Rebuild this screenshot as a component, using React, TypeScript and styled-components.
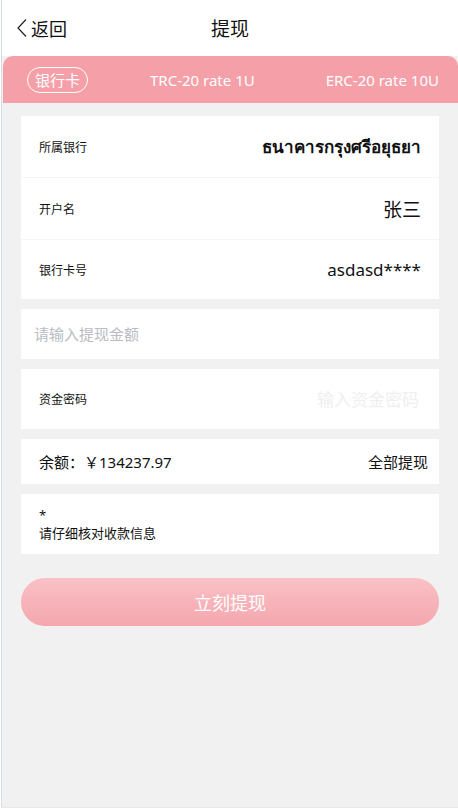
import styled, { createGlobalStyle } from 'styled-components';
import { FC } from 'react';

const GlobalStyle = createGlobalStyle`
  html, body {
    margin: 0;
    padding: 0;
    background: #ffffff;
    font-family: 'Noto Sans', 'Noto Sans CJK SC', sans-serif;
  }
`;

const Page = styled.div`
  width: 456px;
  height: 807px;
  margin-left: 1px;
  border-left: 1px solid #d6dce6;
  border-bottom: 1px solid #e4e7ec;
  background: #f1f1f1;
  display: flex;
  flex-direction: column;
`;

const Header = styled.header`
  height: 56px;
  background: #ffffff;
  display: flex;
  align-items: center;
  position: relative;
`;

const Back = styled.div`
  display: flex;
  align-items: center;
  gap: 2px;
  padding-left: 13px;
  font-size: 18px;
  color: #111;
`;

const Title = styled.h1`
  position: absolute;
  left: 0;
  right: 0;
  margin: 0;
  text-align: center;
  font-size: 19px;
  font-weight: 400;
  color: #111;
  pointer-events: none;
`;

const Tabs = styled.nav`
  height: 47px;
  margin-left: 1px;
  background: #f5a0a8;
  border-radius: 10px 10px 0 0;
  display: flex;
  align-items: center;
  padding: 0 0 0 24px;
  color: #fff;
  font-size: 15px;
`;

const Tab = styled.span<{ $active?: boolean; $offset?: number }>`
  margin-left: ${(p) => p.$offset || 0}px;
  padding: ${(p) => (p.$active ? '1px 7px' : '0')};
  border: ${(p) => (p.$active ? '1px solid #fff' : 'none')};
  border-radius: 14px;
  line-height: 22px;
`;

const Body = styled.main`
  display: flex;
  flex-direction: column;
  gap: 10px;
  padding: 13px 19px 0 19px;
`;

const Card = styled.section`
  background: #fff;
  display: flex;
  flex-direction: column;
`;

const Row = styled.div<{ $h?: number }>`
  height: ${(p) => p.$h || 60}px;
  display: flex;
  align-items: center;
  justify-content: space-between;
  padding: 0 18px;
  & + & {
    border-top: 1px solid #f6f6f6;
  }
`;

const Label = styled.span`
  font-size: 12px;
  color: #111;
`;

const Value = styled.span<{ $size?: number; $bold?: boolean }>`
  font-size: ${(p) => p.$size || 17}px;
  font-weight: ${(p) => (p.$bold ? 600 : 400)};
  color: #111;
`;

const AmountInput = styled.input`
  height: 50px;
  border: none;
  outline: none;
  padding: 0 13px;
  font-family: inherit;
  font-size: 15px;
  background: #fff;
  &::placeholder {
    color: #b9bcc2;
  }
`;

const PwdInput = styled.input`
  width: 150px;
  border: none;
  outline: none;
  text-align: right;
  font-family: inherit;
  font-size: 17px;
  background: transparent;
  &::placeholder {
    color: #efefef;
  }
`;

const Balance = styled.div`
  height: 45px;
  background: #fff;
  display: flex;
  align-items: center;
  justify-content: space-between;
  padding: 0 11px 0 18px;
  font-size: 15px;
  color: #111;
`;

const Notice = styled.div`
  height: 60px;
  background: #fff;
  display: flex;
  flex-direction: column;
  justify-content: center;
  padding: 0 18px;
  font-size: 13px;
  line-height: 18px;
  color: #111;
`;

const Submit = styled.button`
  margin-top: 14px;
  height: 48px;
  border: none;
  border-radius: 24px;
  background: linear-gradient(180deg, #f9c1c6 0%, #f5a6ae 100%);
  color: #fff;
  font-family: inherit;
  font-size: 18px;
`;

const App: FC = () => {
  return (
    <>
      <GlobalStyle />
      <Page>
        <Header>
          <Back>
            <svg width='14' height='20' viewBox='0 0 14 20'>
              <path d='M11 1.5 L3 10 L11 18.5' fill='none' stroke='#222' strokeWidth='1.2' />
            </svg>
            返回
          </Back>
          <Title>提现</Title>
        </Header>
        <Tabs>
          <Tab $active>银行卡</Tab>
          <Tab $offset={62}>TRC-20 rate 1U</Tab>
          <Tab $offset={71}>ERC-20 rate 10U</Tab>
        </Tabs>
        <Body>
          <Card>
            <Row $h={61}>
              <Label>所属银行</Label>
              <Value $bold>ธนาคารกรุงศรีอยุธยา</Value>
            </Row>
            <Row $h={61}>
              <Label>开户名</Label>
              <Value $size={19}>张三</Value>
            </Row>
            <Row $h={59}>
              <Label>银行卡号</Label>
              <Value>asdasd****</Value>
            </Row>
          </Card>
          <AmountInput placeholder='请输入提现金额' />
          <Card>
            <Row>
              <Label>资金密码</Label>
              <PwdInput type='password' placeholder='输入资金密码' />
            </Row>
          </Card>
          <Balance>
            <span>余额：￥134237.97</span>
            <span>全部提现</span>
          </Balance>
          <Notice>
            <span>*</span>
            <span>请仔细核对收款信息</span>
          </Notice>
          <Submit>立刻提现</Submit>
        </Body>
      </Page>
    </>
  );
};

export default App;
